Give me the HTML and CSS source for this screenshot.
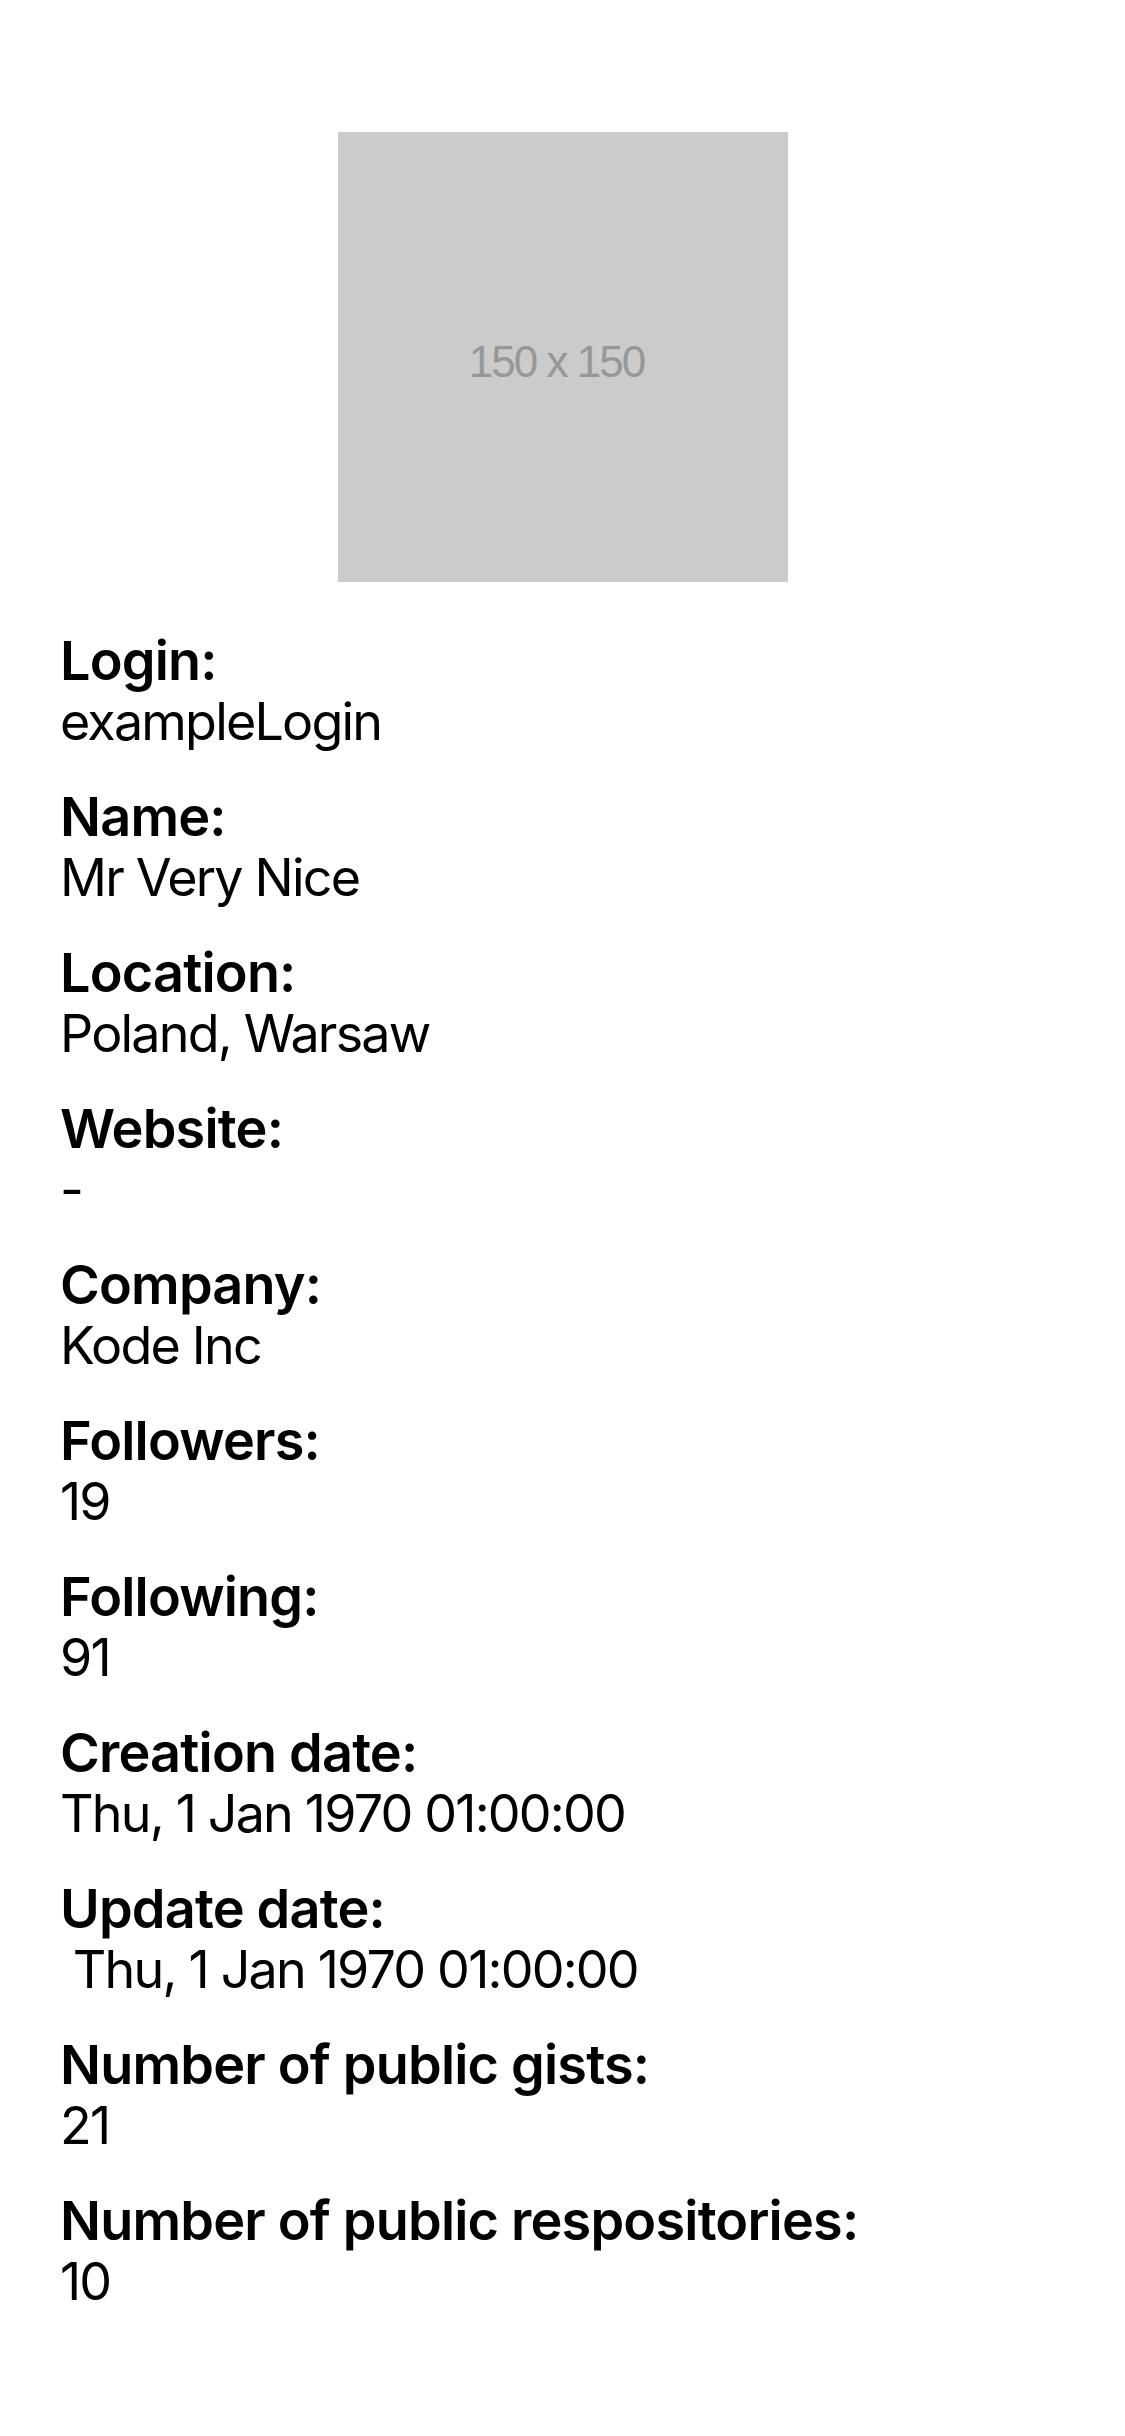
FILE: index.html
```html
<!DOCTYPE html>
<html lang="en">
<head>
<meta charset="utf-8">
<title>User details</title>
<link rel="stylesheet" href="styles.css">
</head>
<body>
<main class="page">
  <div class="avatar"><span class="avatar-text">150 x 150</span></div>
  <section class="details">
    <div class="field"><div class="label">Login:</div><div class="value">exampleLogin</div></div>
    <div class="field"><div class="label">Name:</div><div class="value">Mr Very Nice</div></div>
    <div class="field"><div class="label">Location:</div><div class="value">Poland, Warsaw</div></div>
    <div class="field"><div class="label">Website:</div><div class="value">-</div></div>
    <div class="field"><div class="label">Company:</div><div class="value">Kode Inc</div></div>
    <div class="field"><div class="label">Followers:</div><div class="value">19</div></div>
    <div class="field"><div class="label">Following:</div><div class="value">91</div></div>
    <div class="field"><div class="label">Creation date:</div><div class="value">Thu, 1 Jan 1970 01:00:00</div></div>
    <div class="field"><div class="label">Update date:</div><div class="value">&nbsp;Thu, 1 Jan 1970 01:00:00</div></div>
    <div class="field"><div class="label">Number of public gists:</div><div class="value">21</div></div>
    <div class="field"><div class="label">Number of public respositories:</div><div class="value">10</div></div>
  </section>
</main>
</body>
</html>
```

FILE: styles.css
```css
html, body {
  margin: 0;
  padding: 0;
  background: #ffffff;
}
body {
  width: 1125px;
  min-height: 2436px;
  font-family: Inter, "Liberation Sans", sans-serif;
  color: #000000;
}
.page {
  display: flex;
  flex-direction: column;
  padding: 132px 60px 0 60px;
}
.avatar {
  align-self: center;
  width: 450px;
  height: 450px;
  background: #cbcbcb;
  display: flex;
  align-items: center;
  justify-content: center;
  box-sizing: border-box;
  padding: 10px 12px 0 0;
}
.avatar-text {
  font-family: "Liberation Sans", Arial, sans-serif;
  font-size: 44px;
  letter-spacing: -2px;
  color: #979797;
}
.details {
  display: flex;
  flex-direction: column;
  gap: 34px;
  margin-top: 48px;
}
.field {
  display: flex;
  flex-direction: column;
}
.label {
  font-size: 54px;
  line-height: 62px;
  font-weight: 600;
  letter-spacing: -0.8px;
}
.value {
  font-size: 52px;
  line-height: 60px;
  font-weight: 400;
  letter-spacing: -1.8px;
  white-space: pre;
}
```
